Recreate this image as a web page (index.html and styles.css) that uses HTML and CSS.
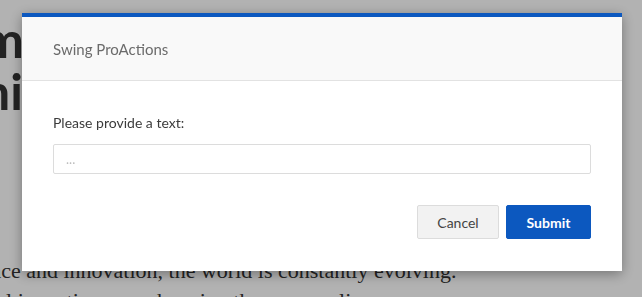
FILE: index.html
```html
<!DOCTYPE html>
<html lang="en">
<head>
  <meta charset="UTF-8">
  <meta name="viewport" content="width=device-width, initial-scale=1.0">
  <title>Swing ProActions</title>
  <link rel="stylesheet" href="styles.css">
</head>
<body>

  <!-- Halaman di belakang dialog -->
  <div class="article">
    <h1 class="headline">modern science<br>history</h1>
    <p class="lead">science and innovation, the world is constantly evolving.<br>
    digital inventions are changing the way we live.</p>
  </div>

  <!-- Overlay + dialog -->
  <div class="overlay">
    <div class="dialog">
      <div class="dialog-header">Swing ProActions</div>
      <div class="dialog-body">
        <label class="field-label" for="textInput">Please provide a text:</label>
        <input type="text" id="textInput" class="field-input" placeholder="...">
        <div class="actions">
          <button class="btn btn-cancel">Cancel</button>
          <button class="btn btn-submit">Submit</button>
        </div>
      </div>
    </div>
  </div>

</body>
</html>
```

FILE: styles.css
```css
/* Gaya dasar */
body {
  font-family: Lato, "Open Sans", sans-serif;
  margin: 0;
  padding: 0;
  background: #fff;
  overflow: hidden;
  height: 297px;
}
/* Halaman belakang */
.article {
  padding-top: 13px;
  height: 284px;
  overflow: hidden;
}
.headline {
  font-family: Lato, sans-serif;
  font-weight: 700;
  font-size: 50px;
  line-height: 52px;
  color: #333;
  margin: 0 0 0 -18px;
  white-space: nowrap;
}
.lead {
  font-family: "Liberation Serif", serif;
  font-size: 22px;
  line-height: 30px;
  color: #333;
  margin: 139px 0 0 -44px;
  white-space: nowrap;
}
/* Overlay */
.overlay {
  position: fixed;
  top: 0;
  left: 0;
  right: 0;
  bottom: 0;
  background: rgba(0, 0, 0, 0.3);
  display: flex;
  justify-content: center;
  align-items: flex-start;
  padding: 13px 0 0 2px;
}
.dialog {
  width: 600px;
  background: #fff;
  border-top: 4px solid #0c58bf;
  box-shadow: 0 3px 12px rgba(0, 0, 0, 0.35);
}
.dialog-header {
  background: #f9f9f9;
  border-bottom: 1px solid #e2e2e2;
  height: 64px;
  box-sizing: border-box;
  padding: 0 31px;
  display: flex;
  align-items: center;
  font-size: 15px;
  color: #6b6b6b;
}
.dialog-body {
  padding: 32px 31px 32px;
  display: flex;
  flex-direction: column;
}
.field-label {
  font-size: 14px;
  line-height: 20px;
  color: #3b3b3b;
  margin-bottom: 11px;
}
.field-input {
  height: 30px;
  box-sizing: border-box;
  border: 1px solid #dcdcdc;
  border-radius: 2px;
  padding: 0 12px;
  font-family: inherit;
  font-size: 13px;
  color: #333;
  outline: none;
}
.field-input::placeholder {
  color: #bdbdbd;
}
.actions {
  display: flex;
  justify-content: flex-end;
  gap: 7px;
  margin-top: 31px;
}
.btn {
  height: 34px;
  font-family: inherit;
  font-size: 14px;
  border-radius: 2px;
  cursor: pointer;
}
.btn-cancel {
  width: 82px;
  background: #f2f2f2;
  border: 1px solid #dcdcdc;
  color: #444;
}
.btn-submit {
  width: 85px;
  background: #0c58bf;
  border: 1px solid #0c58bf;
  color: #fff;
  font-weight: 700;
}
```
